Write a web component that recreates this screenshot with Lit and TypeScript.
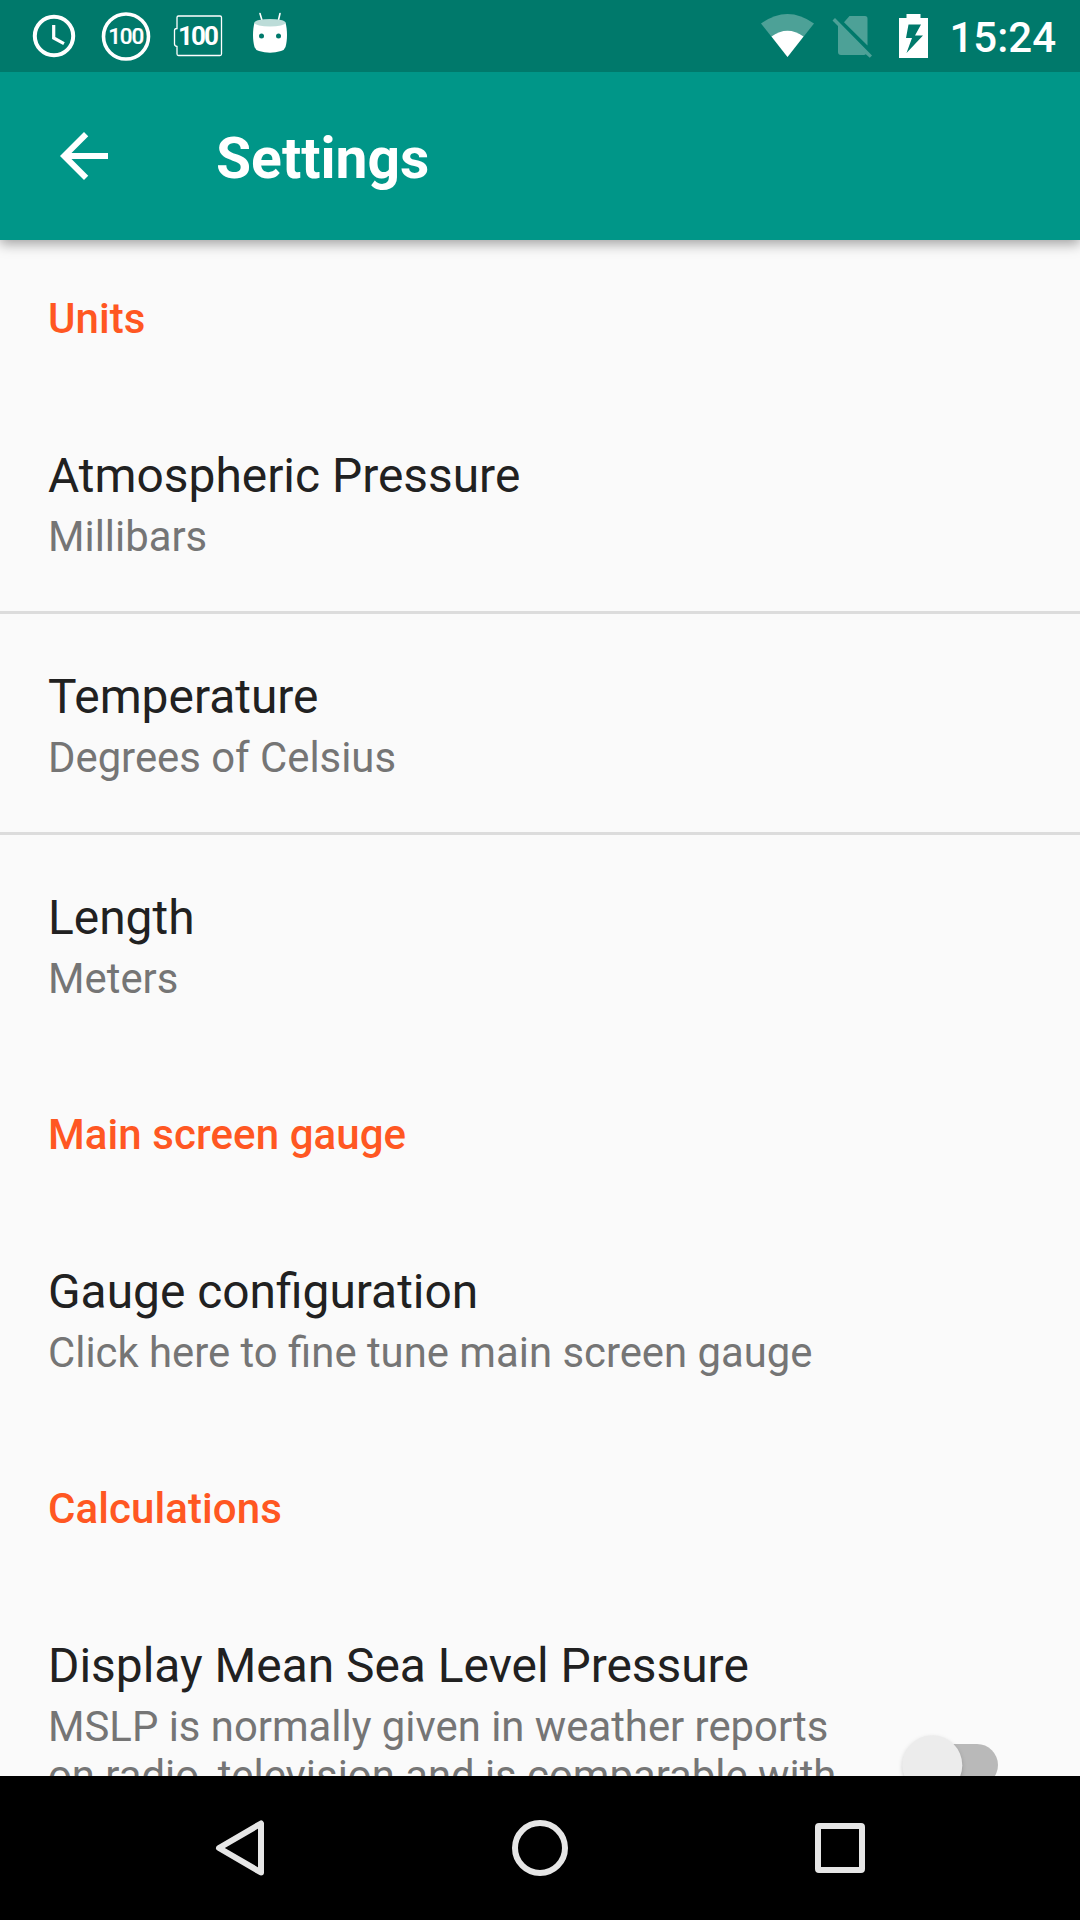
import { LitElement, html, css } from "lit";
import { customElement } from "lit/decorators.js";

interface Row { title: string; summary: string; toggle?: boolean }
interface Section { label: string; rows: Row[] }

const SECTIONS: Section[] = [
  { label: "Units", rows: [
    { title: "Atmospheric Pressure", summary: "Millibars" },
    { title: "Temperature", summary: "Degrees of Celsius" },
    { title: "Length", summary: "Meters" },
  ] },
  { label: "Main screen gauge", rows: [
    { title: "Gauge configuration", summary: "Click here to fine tune main screen gauge" },
  ] },
  { label: "Calculations", rows: [
    { title: "Display Mean Sea Level Pressure", summary: "MSLP is normally given in weather reports on radio, television and is comparable with", toggle: true },
  ] },
];

@customElement("status-bar")
export class StatusBar extends LitElement {
  static styles = css`
    :host { display: flex; align-items: center; justify-content: space-between; height: 72px; flex: none; background: #00796b; color: #fff; z-index: 2; }
    .icon { display: block; flex: none; }
    .signals { margin-right: -1px; }
    .clock { font-size: 42px; font-weight: 500; line-height: 68px; padding-top: 4px; margin-right: 24px; }
    .side { display: flex; align-items: center; }
    .badge { font-family: Roboto, sans-serif; font-weight: 500; font-size: 22.5px; stroke: #fff; stroke-width: .2px; }
    .heavy { font-family: Roboto, sans-serif; font-weight: 700; font-size: 26px; }
  `;
  render() {
    return html`
      <div class="side">
        <svg class="icon" width="320" height="72" viewBox="0 0 320 72" fill="none">
          <circle cx="54" cy="36" r="19.2" stroke="#fff" stroke-width="4" />
          <path d="M53.7 25V38L64 43.6" stroke="#fff" stroke-width="3.2" />
          <circle cx="126" cy="36.5" r="22.5" stroke="#fff" stroke-width="3.6" />
          <text class="badge" x="126.2" y="43.9" text-anchor="middle" textLength="36" fill="#fff">100</text>
          <path d="M178.5 16H220Q221.500 16 221.500 17.500V54Q221.500 55.500 220 55.500H178.500Q177 55.500 177 54V46.500Q174.500 46 174.500 44V30.500Q174.500 28.500 177 28.500V17.500Q177 16 178.500 16Z" stroke="#fff" stroke-width="1.300" />
          <text class="heavy" x="198.500" y="45.300" text-anchor="middle" textLength="41" fill="#fff">100</text>
          <path d="M260 13.500L262.500 22M280 13.500L278 22" stroke="#fff" stroke-width="1.600" stroke-linecap="round" />
          <path d="M254.500 22.500C252.500 30 252.500 40 254.500 47Q255.500 50 259 51Q270 54.500 281 51Q284.500 50 285.500 47C287.500 40 287.500 30 285.500 22.500Z" fill="#fff" />
          <ellipse cx="270" cy="22.700" rx="15.500" ry="3.800" fill="#bcdcd8" />
          <circle cx="261.500" cy="36" r="2.500" fill="#00796b" />
          <circle cx="278.500" cy="36" r="2.500" fill="#00796b" />
        </svg>
      </div>
      <div class="side">
        <svg class="icon signals" width="190" height="72" viewBox="760 0 190 72">
          <path d="M761 23.500Q787.500 4.500 814 23.500L787.500 57Z" fill="#fff" opacity=".3" />
          <path d="M771.500 36.500Q787.500 25 803.500 36.500L787.500 57Z" fill="#fff" />
          <path d="M844 22.300L849.500 16H865Q867.500 16 867.500 18.500V45.600ZM835 18L872 55.500L869.800 57.700L865.800 54.300Q865 55 864 55H841Q838 55 838 52V26L832.500 20.500Z" fill="#fff" opacity=".3" />
          <path fill-rule="evenodd" d="M906.500 14H920.500V18H928V58H899V18H906.500ZM908.500 24.500L906 38H912L906.500 53L923 35.500H915L921 24.500Z" fill="#fff" />
        </svg>
        <span class="clock">15:24</span>
      </div>`;
  }
}

@customElement("app-toolbar")
export class AppToolbar extends LitElement {
  static styles = css`
    :host { display: flex; align-items: center; gap: 108px; height: 168px; flex: none; padding-left: 60px; background: #009688; color: #fff; box-shadow: 0 4px 12px rgba(0, 0, 0, .36); z-index: 1; }
    .arrow { display: block; flex: none; }
    .title { font-size: 57px; font-weight: 700; line-height: 67px; padding-top: 4px; }
  `;
  render() {
    return html`
      <svg class="arrow" width="48" height="48" viewBox="4 4 16 16" fill="#fff"><path d="M20 11H7.830l5.590-5.590L12 4l-8 8 8 8 1.410-1.410L7.830 13H20v-2z" /></svg>
      <span class="title">Settings</span>`;
  }
}

@customElement("preference-row")
export class PreferenceRow extends LitElement {
  static properties = { row: { attribute: false } };
  declare row: Row;
  static styles = css`
    :host { display: flex; align-items: flex-start; min-height: 218px; box-sizing: border-box; padding: 55px 48px 48px; }
    .text { flex: 1; min-width: 0; }
    .title { font-size: 47.88px; line-height: 57px; margin-bottom: 7px; color: #212121; white-space: nowrap; }
    .summary { font-size: 41.83px; line-height: 49px; color: #757575; }
    .narrow { max-width: 800px; }
    .switch { display: block; flex: none; margin-top: 85px; }
    .thumb { filter: drop-shadow(0 2px 2px rgba(0, 0, 0, .18)); }
  `;
  render() {
    const { title, summary, toggle } = this.row;
    return html`
      <div class="text">
        <div class="title">${title}</div>
        <div class="summary ${toggle ? "narrow" : ""}">${summary}</div>
      </div>
      ${toggle ? html`<svg class="switch" width="140" height="84" viewBox="0 0 140 84">
        <rect x="12" y="21" width="94" height="42" rx="21" fill="#b9b9b9" />
        <circle class="thumb" cx="40.300" cy="42.300" r="30" fill="#ececec" />
      </svg>` : ""}`;
  }
}

@customElement("navigation-bar")
export class NavigationBar extends LitElement {
  static styles = css`
    :host { display: flex; justify-content: center; align-items: center; gap: 240px; height: 144px; flex: none; background: #000; z-index: 1; }
    .key { display: block; width: 60px; height: 60px; fill: none; stroke: #e6e6e6; stroke-width: 6; stroke-linejoin: round; }
  `;
  render() {
    return html`
      <svg class="key" viewBox="0 0 60 60"><path d="M51 5.500V54.500L9 30Z" /></svg>
      <svg class="key" viewBox="0 0 60 60"><circle cx="30" cy="30" r="25" /></svg>
      <svg class="key" viewBox="0 0 60 60"><rect x="8" y="8" width="44" height="44" rx="1" /></svg>`;
  }
}

@customElement("app-root")
export class AppRoot extends LitElement {
  static styles = css`
    :host { display: flex; flex-direction: column; width: 1080px; height: 1920px; overflow: hidden; background: #fafafa; font-family: Roboto, sans-serif; }
    .list { flex: 1; min-height: 0; overflow: hidden; }
    .label { height: 156px; box-sizing: border-box; padding: 57px 48px 0; font-size: 42px; line-height: 49px; font-weight: 500; letter-spacing: .08px; color: #ff5722; }
    .label:first-child { height: 153px; padding-top: 54px; }
    .divider { height: 3px; background: #dcdcdc; }
  `;
  render() {
    return html`
      <status-bar></status-bar>
      <app-toolbar></app-toolbar>
      <div class="list">
        ${SECTIONS.map((s) => html`
          <div class="label">${s.label}</div>
          ${s.rows.map((r, i) => html`
            ${i ? html`<div class="divider"></div>` : ""}
            <preference-row .row=${r}></preference-row>`)}`)}
      </div>
      <navigation-bar></navigation-bar>`;
  }
}
